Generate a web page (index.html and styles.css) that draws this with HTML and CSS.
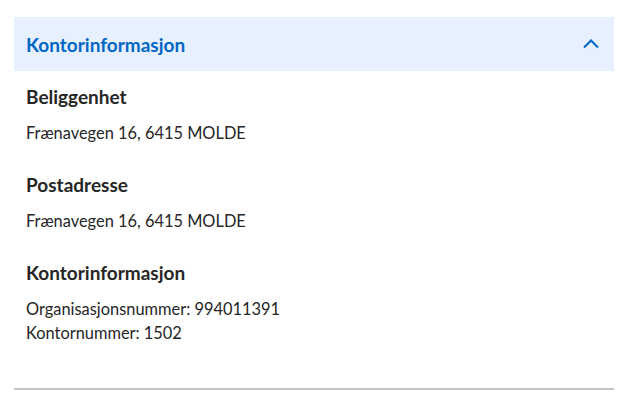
FILE: index.html
```html
<!DOCTYPE html>
<html>
<head>
  <meta charset="UTF-8">
  <title>Kontorinformasjon</title>
  <link rel="stylesheet" href="styles.css">
</head>
<body>
  <div class="panel">
    <div class="panel-header">
      <span class="panel-title">Kontorinformasjon</span>
      <svg class="chevron" width="24" height="24" viewBox="0 0 24 24" fill="none">
        <path d="M5 15.5l7-7 7 7" stroke="#0067c5" stroke-width="2"/>
      </svg>
    </div>
    <div class="panel-body">
      <div class="section">
        <h3>Beliggenhet</h3>
        <p>Frænavegen 16, 6415 MOLDE</p>
      </div>
      <div class="section">
        <h3>Postadresse</h3>
        <p>Frænavegen 16, 6415 MOLDE</p>
      </div>
      <div class="section">
        <h3>Kontorinformasjon</h3>
        <p>Organisasjonsnummer: 994011391<br>Kontornummer: 1502</p>
      </div>
    </div>
  </div>
</body>
</html>
```
FILE: styles.css
```css
body { margin: 17px 16px 0 14px; font-family: Lato, sans-serif; color: #262626; background: #fff; }
.panel { border-bottom: 2px solid #c6c6c6; }
.panel-header { display: flex; align-items: center; justify-content: space-between; height: 54px; padding: 0 11px 0 12px; background: #e6f0ff; }
.panel-title { font-size: 19px; font-weight: 700; color: #0067c5; }
.chevron { display: block; }
.panel-body { padding: 14px 12px 43px; }
.section + .section { margin-top: 28px; }
h3 { margin: 0 0 12px; font-size: 19px; line-height: 24px; font-weight: 700; }
p { margin: 0; font-size: 16.4px; line-height: 24px; }
```
